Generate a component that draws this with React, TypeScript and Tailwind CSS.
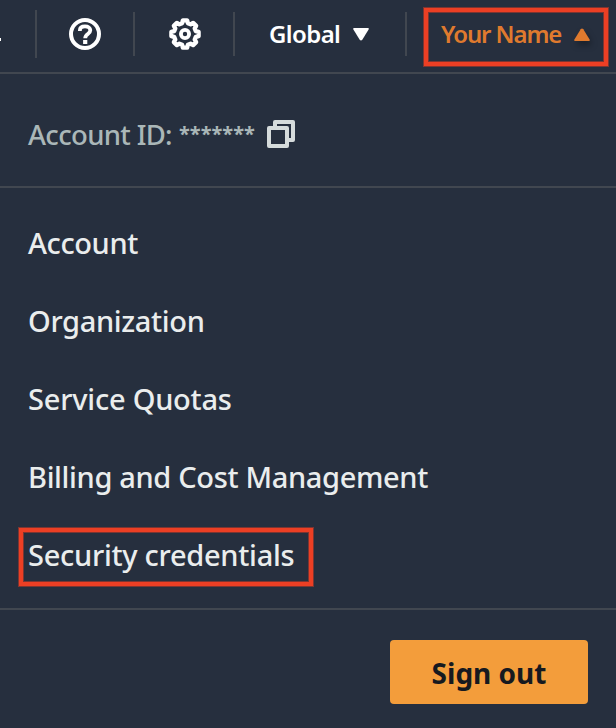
import React from "react";

const gearPoints = Array.from({ length: 8 }, (_, i) => {
  const polar = (deg: number, r: number) => {
    const a = ((i * 45 + deg) * Math.PI) / 180;
    return `${(16 + r * Math.cos(a)).toFixed(2)},${(16 + r * Math.sin(a)).toFixed(2)}`;
  };
  return [polar(-9, 13.8), polar(9, 13.8), polar(15, 11.2), polar(30, 11.2)].join(" ");
}).join(" ");

function HelpIcon() {
  return (
    <svg width="32" height="32" viewBox="0 0 32 32" fill="none" stroke="#fff" className="shrink-0">
      <circle cx="16" cy="16" r="14" strokeWidth="4" />
      <path d="M10.9 12.9v-.6c0-2.5 1.9-4 5.1-4s5.3 1.6 5.3 4c0 3.9-5.1 3.5-5.1 7.9" strokeWidth="3.8" />
      <path d="M14.1 24h4.2" strokeWidth="4" />
    </svg>
  );
}

function GearIcon() {
  return (
    <svg width="32" height="32" viewBox="0 0 32 32" fill="none" stroke="#fff" className="shrink-0">
      <polygon points={gearPoints} strokeWidth="4.3" strokeLinejoin="round" />
      <circle cx="16" cy="16" r="4.1" strokeWidth="3.8" />
    </svg>
  );
}

function CopyIcon() {
  return (
    <svg width="28" height="28" viewBox="0 0 28 28" fill="none" stroke="#d5dbdb" strokeWidth="4" strokeLinejoin="round" className="shrink-0">
      <rect x="2" y="8" width="18" height="18" />
      <path d="M8 8V2h18v18h-6" />
    </svg>
  );
}

const items = [
  { label: "Account", tracking: "tracking-[-0.4px]" },
  { label: "Organization", tracking: "tracking-[-0.33px]" },
  { label: "Service Quotas", tracking: "tracking-[-0.22px]" },
  { label: "Billing and Cost Management", tracking: "tracking-[-0.34px]" },
];

export default function App() {
  return (
    <div className="flex h-[728px] w-[616px] flex-col overflow-hidden bg-[#262f3e] font-['Noto_Sans',sans-serif] whitespace-nowrap">
      <header className="flex h-[74px] shrink-0 items-start border-b-2 border-[#414750]">
        <div className="mt-[38px] h-[3px] w-px bg-white" />
        <div className="mt-[10px] ml-[34px] h-12 w-0.5 bg-[#414750]" />
        <div className="mt-[18px] ml-8"><HelpIcon /></div>
        <div className="mt-3 ml-8 h-11 w-0.5 bg-[#414750]" />
        <div className="mt-[18px] ml-[34px]"><GearIcon /></div>
        <div className="mt-3 ml-8 h-11 w-0.5 bg-[#414750]" />
        <div className="mt-[18px] ml-[34px] flex h-8 w-[136px] items-center text-[24px] leading-8 font-semibold tracking-[-0.6px] text-white">
          <span className="w-[84px]">Global</span>
          <svg width="16" height="13" viewBox="0 0 16 13" fill="#fff"><path d="M1.2 0h13.6q1.6 0 .8 1.5L9.3 11.8q-1.3 1.5-2.6 0L.4 1.5Q-.4 0 1.2 0Z" /></svg>
        </div>
        <div className="mt-3 h-11 w-0.5 bg-[#414750]" />
        <div className="mt-2 ml-[17px] flex h-[58px] w-[184px] items-start border-4 border-[#ec3f24] pt-[6px] pl-[13px] shadow-[0_0_0_1px_#7d3531,inset_0_0_0_1px_#7d3531]">
          <span className="w-[133px] text-[24px] leading-8 font-semibold tracking-[-1.1px] text-[#df7a2e]">Your Name</span>
          <svg width="16" height="13" viewBox="0 0 16 13" fill="#df7a2e" className="mt-[9.5px] shrink-0 drop-shadow-[2px_4px_3px_#0005]"><path d="M1.2 13h13.6q1.6 0 .8-1.5L9.3 1.2q-1.3-1.5-2.6 0L.4 11.5Q-.4 13 1.2 13Z" /></svg>
        </div>
      </header>
      <section className="flex h-[114px] shrink-0 items-start border-b-2 border-[#414750] pl-7 text-[#aab7b8]">
        <span className="mt-[41px] w-[151px] text-[27.5px] leading-10 font-medium tracking-[-0.67px]">Account ID:</span>
        <span className="mt-[40px] w-[88px] text-[20px] leading-10 font-bold">*******</span>
        <div className="mt-[46px]"><CopyIcon /></div>
      </section>
      <nav className="flex h-[422px] shrink-0 flex-col items-start border-b-2 border-[#414750] pt-[35px] text-[29px] font-medium text-[#eaeded]">
        {items.map(({ label, tracking }) => (
          <a key={label} className={`mb-[38px] h-10 pl-7 leading-10 ${tracking}`}>{label}</a>
        ))}
        <a className="-mt-[7px] ml-[19px] h-[58px] w-[294px] border-4 border-[#ec3f24] pt-[3px] pl-[5px] leading-10 tracking-[-0.28px] shadow-[0_0_0_1px_#7d3531,inset_0_0_0_1px_#7d3531]">Security credentials</a>
      </nav>
      <footer className="flex justify-end pt-[30px] pr-7">
        <button className="h-16 w-[198px] rounded-[4px] bg-[#f39d3b] pt-[2px] text-[28px] leading-10 font-bold text-[#16191f]">Sign out</button>
      </footer>
    </div>
  );
}
